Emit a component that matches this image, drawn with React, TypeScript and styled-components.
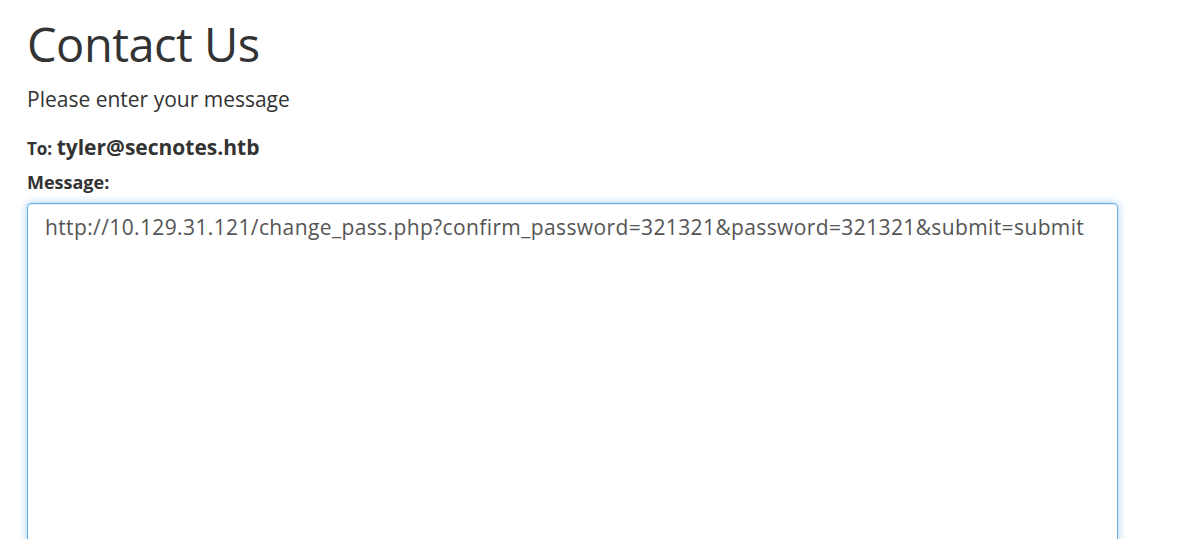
import styled, { createGlobalStyle } from "styled-components";

const GlobalStyle = createGlobalStyle`
    html, body {
        margin: 0;
        padding: 0;
        background: #fff;
        overflow: hidden;
    }
    body {
        font-family: "Open Sans", "Noto Sans", "Liberation Sans", sans-serif;
        color: #333;
    }
`;

const Page = styled.div`
    padding: 19px 0 0 27px;
    width: 1091px;
`;

const Title = styled.h1`
    margin: 0;
    font-size: 47px;
    font-weight: 400;
    line-height: 1.1;
    color: #333;
    letter-spacing: -0.5px;
`;

const Lead = styled.p`
    margin: 14px 0 0;
    font-size: 21px;
    font-weight: 400;
    line-height: 1.4;
`;

const Label = styled.label<{ $size: number; $gap: number }>`
    display: block;
    margin-top: ${({ $gap }) => $gap}px;
    font-size: ${({ $size }) => $size}px;
    font-weight: 700;
    line-height: 1.4;
`;

const Recipient = styled.span`
    font-size: 21px;
`;

const MessageBox = styled.textarea`
    box-sizing: border-box;
    display: block;
    margin-top: 7px;
    width: 1091px;
    height: 400px;
    padding: 8px 17px;
    font-family: inherit;
    font-size: 21px;
    letter-spacing: 0.38px;
    line-height: 1.5;
    color: #555;
    background: #fff;
    border: 1px solid #66afe9;
    border-radius: 4px;
    outline: none;
    resize: none;
    box-shadow: inset 0 1px 1px rgba(0, 0, 0, 0.075), 0 0 8px rgba(102, 175, 233, 0.6);
`;

const App = () => {
    return (
        <>
            <GlobalStyle />
            <Page>
                <Title>Contact Us</Title>
                <Lead>Please enter your message</Lead>
                <Label $size={17} $gap={19}>
                    To: <Recipient>tyler@secnotes.htb</Recipient>
                </Label>
                <Label $size={18} $gap={8} htmlFor="msg">Message:</Label>
                <MessageBox
                    id="msg"
                    readOnly
                    defaultValue="http://10.129.31.121/change_pass.php?confirm_password=321321&password=321321&submit=submit"
                />
            </Page>
        </>
    );
};

export default App;
